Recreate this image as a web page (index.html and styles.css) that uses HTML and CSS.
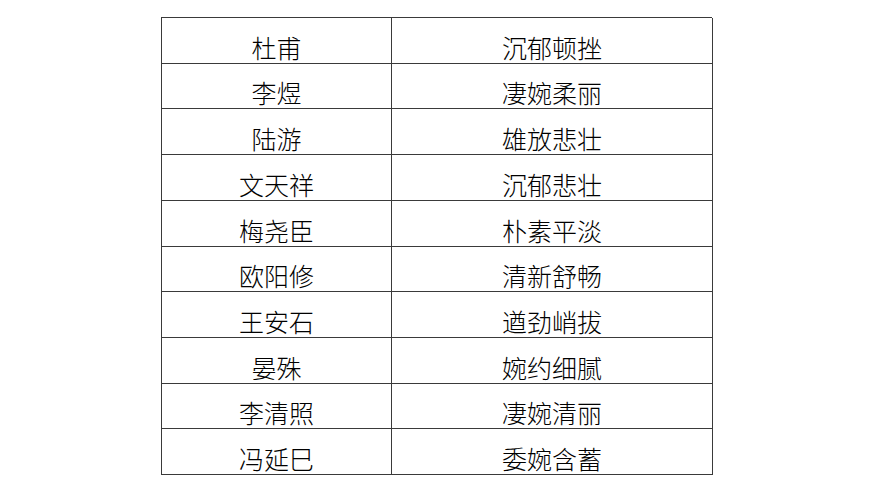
FILE: index.html
```html
<!DOCTYPE html>
<html lang="zh">
<head>
<meta charset="utf-8">
<link rel="stylesheet" href="styles.css">
</head>
<body>
<div class="sheet">
  <div class="grid">
    <div class="cell">杜甫</div><div class="cell">沉郁顿挫</div>
    <div class="cell">李煜</div><div class="cell">凄婉柔丽</div>
    <div class="cell">陆游</div><div class="cell">雄放悲壮</div>
    <div class="cell">文天祥</div><div class="cell">沉郁悲壮</div>
    <div class="cell">梅尧臣</div><div class="cell">朴素平淡</div>
    <div class="cell">欧阳修</div><div class="cell">清新舒畅</div>
    <div class="cell">王安石</div><div class="cell">遒劲峭拔</div>
    <div class="cell">晏殊</div><div class="cell">婉约细腻</div>
    <div class="cell">李清照</div><div class="cell">凄婉清丽</div>
    <div class="cell">冯延巳</div><div class="cell">委婉含蓄</div>
  </div>
</div>
</body>
</html>
```
FILE: styles.css
```css
html, body {
  margin: 0;
  padding: 0;
  background: #ffffff;
}
.sheet {
  padding: 17px 0 0 161px;
}
.grid {
  display: grid;
  grid-template-columns: 230px 321px;
  grid-template-rows: repeat(10, 1fr);
  width: 551px;
  height: 458px;
  box-sizing: border-box;
  border-top: 1px solid #3a3a3a;
  border-left: 1px solid #3a3a3a;
}
.cell {
  border-right: 1px solid #3a3a3a;
  border-bottom: 1px solid #3a3a3a;
  display: flex;
  align-items: flex-end;
  justify-content: center;
  padding-bottom: 3px;
  font-family: "Noto Sans CJK SC", sans-serif;
  font-size: 25px;
  line-height: 1;
  color: #000;
  font-weight: 300;
}
```
